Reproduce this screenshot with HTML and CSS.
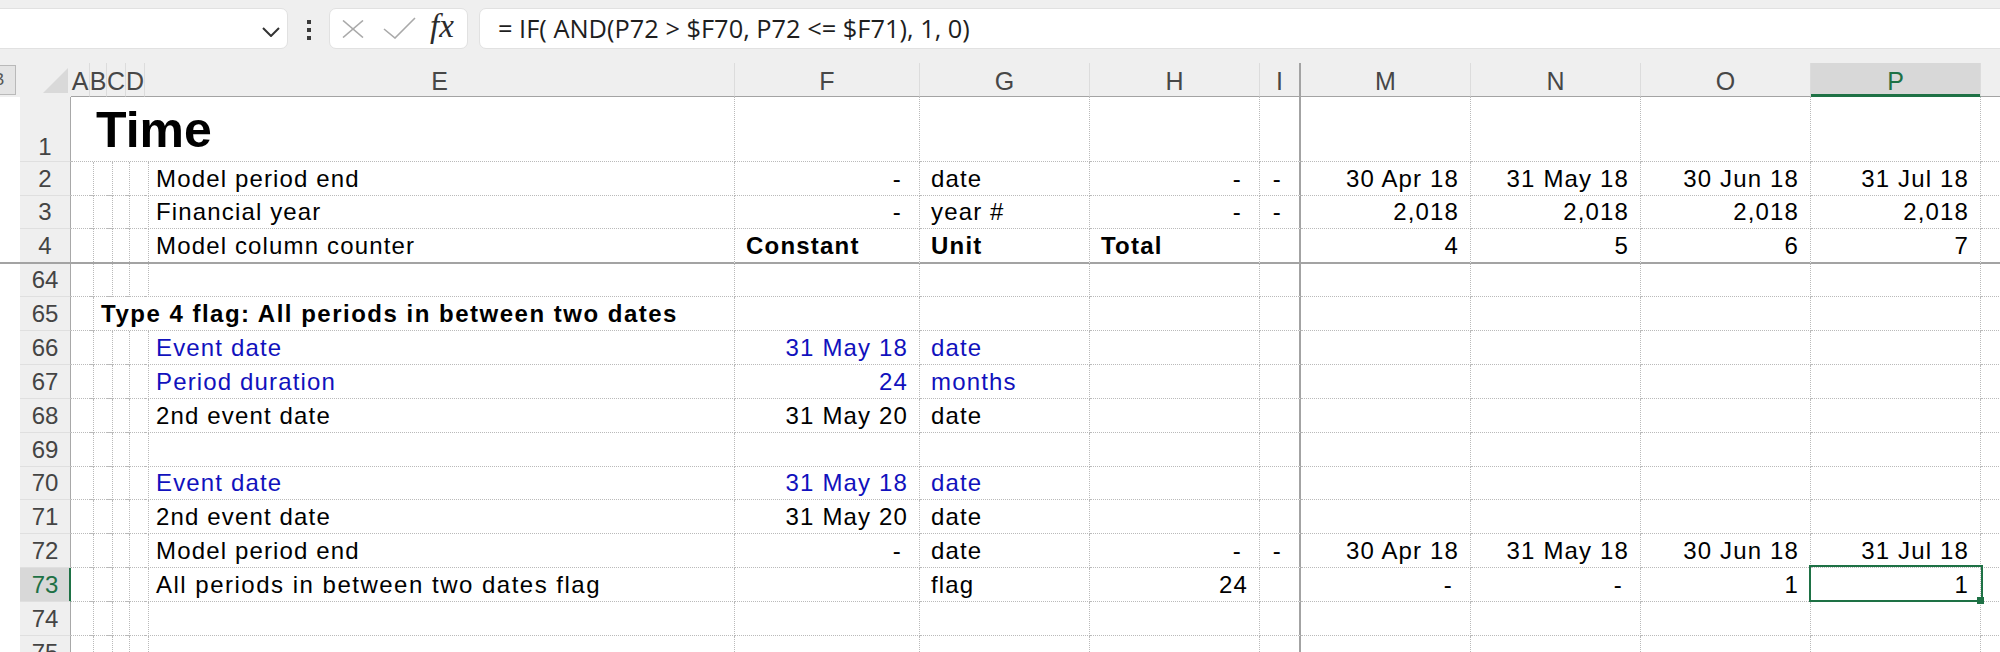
FILE: index.html
```html
<!DOCTYPE html>
<html>
<head>
<meta charset="utf-8">
<title>Time sheet</title>
<link rel="stylesheet" href="styles.css">
</head>
<body>
<div class="app">
  <div class="fbar">
    <div class="namebox">
      <svg class="chev" viewBox="0 0 18 10"><polyline points="1,1 9,9 17,1" fill="none" stroke="#333" stroke-width="2"/></svg>
    </div>
    <div class="vdots"><i></i><i></i><i></i></div>
    <div class="fbtns">
      <svg class="ico-x" viewBox="0 0 22 18"><line x1="1" y1="0.5" x2="21" y2="17.5" stroke="#a9a9a9" stroke-width="1.6"/><line x1="21" y1="0.5" x2="1" y2="17.5" stroke="#a9a9a9" stroke-width="1.6"/></svg>
      <svg class="ico-ok" viewBox="0 0 33 22"><polyline points="1,12 12,21 32,1" fill="none" stroke="#a9a9a9" stroke-width="1.6"/></svg>
      <span class="fx">fx</span>
    </div>
    <div class="finput">= IF( AND(P72 &gt; $F70, P72 &lt;= $F71), 1, 0)</div>
  </div>

  <div class="sheet">
    <div class="row hdr">
      <div class="stub"><div class="bbox">B</div></div>
      <div class="corner"><svg viewBox="0 0 25 25"><polygon points="0,25 25,0 25,25" fill="#d9d9d9"/></svg></div>
      <div class="ch">A</div><div class="ch">B</div><div class="ch">C</div><div class="ch">D</div>
      <div class="ch">E</div><div class="ch">F</div><div class="ch">G</div><div class="ch">H</div>
      <div class="ch i">I</div><div class="ch">M</div><div class="ch">N</div><div class="ch">O</div>
      <div class="ch act">P</div><div class="ch"></div>
    </div>

    <div class="row h65">
      <div class="stub"></div><div class="rh r1">1</div>
      <div class="c span5 title">Time</div>
      <div class="c"></div><div class="c"></div><div class="c"></div><div class="c i"></div>
      <div class="c"></div><div class="c"></div><div class="c"></div><div class="c"></div><div class="c"></div>
    </div>

    <div class="row h34">
      <div class="stub"></div><div class="rh">2</div>
      <div class="c"></div><div class="c"></div><div class="c"></div><div class="c"></div>
      <div class="c">Model period end</div><div class="c r d">-</div><div class="c">date</div><div class="c r d">-</div><div class="c r d i">-</div>
      <div class="c r">30 Apr 18</div><div class="c r">31 May 18</div><div class="c r">30 Jun 18</div><div class="c r">31 Jul 18</div><div class="c"></div>
    </div>

    <div class="row h33">
      <div class="stub"></div><div class="rh">3</div>
      <div class="c"></div><div class="c"></div><div class="c"></div><div class="c"></div>
      <div class="c">Financial year</div><div class="c r d">-</div><div class="c">year #</div><div class="c r d">-</div><div class="c r d i">-</div>
      <div class="c r">2,018</div><div class="c r">2,018</div><div class="c r">2,018</div><div class="c r">2,018</div><div class="c"></div>
    </div>

    <div class="row h35 frz">
      <div class="stub"></div><div class="rh">4</div>
      <div class="c"></div><div class="c"></div><div class="c"></div><div class="c"></div>
      <div class="c">Model column counter</div><div class="c b">Constant</div><div class="c b">Unit</div><div class="c b">Total</div><div class="c i"></div>
      <div class="c r">4</div><div class="c r">5</div><div class="c r">6</div><div class="c r">7</div><div class="c"></div>
    </div>

    <div class="row h33">
      <div class="stub"></div><div class="rh">64</div>
      <div class="c"></div><div class="c"></div><div class="c"></div><div class="c"></div>
      <div class="c"></div><div class="c"></div><div class="c"></div><div class="c"></div><div class="c i"></div>
      <div class="c"></div><div class="c"></div><div class="c"></div><div class="c"></div><div class="c"></div>
    </div>

    <div class="row h34">
      <div class="stub"></div><div class="rh">65</div>
      <div class="c"></div>
      <div class="c span4 b wide">Type 4 flag: All periods in between two dates</div>
      <div class="c"></div><div class="c"></div><div class="c"></div><div class="c i"></div>
      <div class="c"></div><div class="c"></div><div class="c"></div><div class="c"></div><div class="c"></div>
    </div>

    <div class="row h34">
      <div class="stub"></div><div class="rh">66</div>
      <div class="c"></div><div class="c"></div><div class="c"></div><div class="c"></div>
      <div class="c blue">Event date</div><div class="c r blue">31 May 18</div><div class="c blue">date</div><div class="c"></div><div class="c i"></div>
      <div class="c"></div><div class="c"></div><div class="c"></div><div class="c"></div><div class="c"></div>
    </div>

    <div class="row h34">
      <div class="stub"></div><div class="rh">67</div>
      <div class="c"></div><div class="c"></div><div class="c"></div><div class="c"></div>
      <div class="c blue">Period duration</div><div class="c r blue">24</div><div class="c blue">months</div><div class="c"></div><div class="c i"></div>
      <div class="c"></div><div class="c"></div><div class="c"></div><div class="c"></div><div class="c"></div>
    </div>

    <div class="row h34">
      <div class="stub"></div><div class="rh">68</div>
      <div class="c"></div><div class="c"></div><div class="c"></div><div class="c"></div>
      <div class="c">2nd event date</div><div class="c r">31 May 20</div><div class="c">date</div><div class="c"></div><div class="c i"></div>
      <div class="c"></div><div class="c"></div><div class="c"></div><div class="c"></div><div class="c"></div>
    </div>

    <div class="row h34">
      <div class="stub"></div><div class="rh">69</div>
      <div class="c"></div><div class="c"></div><div class="c"></div><div class="c"></div>
      <div class="c"></div><div class="c"></div><div class="c"></div><div class="c"></div><div class="c i"></div>
      <div class="c"></div><div class="c"></div><div class="c"></div><div class="c"></div><div class="c"></div>
    </div>

    <div class="row h33">
      <div class="stub"></div><div class="rh">70</div>
      <div class="c"></div><div class="c"></div><div class="c"></div><div class="c"></div>
      <div class="c blue">Event date</div><div class="c r blue">31 May 18</div><div class="c blue">date</div><div class="c"></div><div class="c i"></div>
      <div class="c"></div><div class="c"></div><div class="c"></div><div class="c"></div><div class="c"></div>
    </div>

    <div class="row h34">
      <div class="stub"></div><div class="rh">71</div>
      <div class="c"></div><div class="c"></div><div class="c"></div><div class="c"></div>
      <div class="c">2nd event date</div><div class="c r">31 May 20</div><div class="c">date</div><div class="c"></div><div class="c i"></div>
      <div class="c"></div><div class="c"></div><div class="c"></div><div class="c"></div><div class="c"></div>
    </div>

    <div class="row h34">
      <div class="stub"></div><div class="rh">72</div>
      <div class="c"></div><div class="c"></div><div class="c"></div><div class="c"></div>
      <div class="c">Model period end</div><div class="c r d">-</div><div class="c">date</div><div class="c r d">-</div><div class="c r d i">-</div>
      <div class="c r">30 Apr 18</div><div class="c r">31 May 18</div><div class="c r">30 Jun 18</div><div class="c r">31 Jul 18</div><div class="c"></div>
    </div>

    <div class="row h34">
      <div class="stub"></div><div class="rh act">73</div>
      <div class="c"></div><div class="c"></div><div class="c"></div><div class="c"></div>
      <div class="c wide">All periods in between two dates flag</div><div class="c"></div><div class="c">flag</div><div class="c r">24</div><div class="c i"></div>
      <div class="c r d">-</div><div class="c r d">-</div><div class="c r">1</div>
      <div class="c r selcell">1<span class="selbox"></span><span class="handle"></span></div>
      <div class="c"></div>
    </div>

    <div class="row h34">
      <div class="stub"></div><div class="rh">74</div>
      <div class="c"></div><div class="c"></div><div class="c"></div><div class="c"></div>
      <div class="c"></div><div class="c"></div><div class="c"></div><div class="c"></div><div class="c i"></div>
      <div class="c"></div><div class="c"></div><div class="c"></div><div class="c"></div><div class="c"></div>
    </div>

    <div class="row h34">
      <div class="stub"></div><div class="rh top">75</div>
      <div class="c"></div><div class="c"></div><div class="c"></div><div class="c"></div>
      <div class="c"></div><div class="c"></div><div class="c"></div><div class="c"></div><div class="c i"></div>
      <div class="c"></div><div class="c"></div><div class="c"></div><div class="c"></div><div class="c"></div>
    </div>
  </div>
</div>
</body>
</html>
```

FILE: styles.css
```css
* { box-sizing: border-box; margin: 0; padding: 0; }
html, body { width: 2000px; height: 652px; overflow: hidden; background: #fff; }
body { font-family: "Liberation Sans", Arial, sans-serif; color: #000; }
.app { width: 2000px; height: 652px; overflow: hidden; }

/* formula bar */
.fbar { height: 63px; background: #efefef; display: flex; align-items: flex-start; padding-top: 8px; overflow: hidden; }
.namebox { flex: none; width: 298px; margin-left: -10px; height: 41px; background: #fff; border: 1px solid #e1e1e1; border-radius: 7px; display: flex; align-items: center; justify-content: flex-end; padding: 7px 7px 0 0; }
.chev { width: 18px; height: 10px; display: block; }
.vdots { flex: none; width: 41px; display: flex; flex-direction: column; align-items: center; gap: 4px; padding-top: 12px; }
.vdots i { display: block; width: 4px; height: 4px; background: #3a3a3a; }
.fbtns { flex: none; width: 139px; height: 41px; background: #fff; border: 1px solid #e1e1e1; border-radius: 7px; display: flex; align-items: center; }
.ico-x { width: 22px; height: 18px; margin-left: 12px; display: block; }
.ico-ok { width: 33px; height: 22px; margin-left: 19px; margin-top: -2px; display: block; }
.fx { font-family: "Liberation Serif", "Times New Roman", serif; font-style: italic; font-size: 33px; color: #2b2b2b; margin-left: 14px; line-height: 39px; margin-top: -4px; }
.finput { flex: none; width: 1540px; margin-left: 11px; height: 41px; background: #fff; border: 1px solid #e1e1e1; border-radius: 7px; padding-left: 18px; font-family: "Open Sans", "Noto Sans", sans-serif; font-size: 25.4px; line-height: 39px; color: #1e1e1e; white-space: nowrap; }

/* sheet */
.sheet { width: 2000px; overflow: hidden; }
.row { display: grid; grid-template-columns: 20px 51px 19px 17px 19px 19px 590px 185px 170px 170px 41px 170px 170px 170px 170px 100px; width: 2081px; }
.hdr { height: 34px; background: #efefef; }
.h33 { height: 33px; }
.h34 { height: 34px; }
.h35 { height: 35px; }
.h65 { height: 65px; }

.stub { background: #fff; }
.hdr .stub { background: #efefef; padding-top: 2px; }
.bbox { width: 16px; height: 30px; border: 1px solid #b9b9b9; border-left: none; background: #e4e4e4; overflow: hidden; font-size: 17px; line-height: 28px; text-indent: -7px; color: #555; white-space: nowrap; }
.corner { display: flex; justify-content: flex-end; align-items: flex-end; padding: 0 3px 4px 0; }
.corner svg { width: 25px; height: 25px; display: block; }

.ch { display: flex; justify-content: center; align-items: flex-end; padding-bottom: 1px; font-size: 25px; line-height: 28px; color: #474747; border-right: 1px solid #dcdcdc; border-bottom: 1px solid #a3a3a3; white-space: nowrap; overflow: visible; }
.ch.i { border-right: 2px solid #a3a3a3; }
.ch.act { background: #d8d8d8; color: #1e7145; border-bottom-color: #1e7145; box-shadow: inset 0 -2px 0 #1e7145; }

.rh { background: #efefef; border-right: 1px solid #a8a8a8; border-bottom: 1px solid #dfdfdf; display: flex; justify-content: center; align-items: flex-end; padding-bottom: 3px; font-size: 24px; line-height: 27px; color: #444; }
.rh.r1 { padding-bottom: 1px; }
.rh.act { background: #d8d8d8; color: #1e7145; border-right: 1px solid #1e7145; box-shadow: inset -1px 0 0 #1e7145; }
.rh.top { align-items: flex-start; padding-top: 3px; }

.c { display: flex; align-items: flex-end; padding: 0 11px 3px 11px; border-right: 1px dotted #bababa; border-bottom: 1px dotted #bababa; font-size: 24px; letter-spacing: 1.15px; line-height: 27px; white-space: nowrap; overflow: visible; }
.c.r { justify-content: flex-end; }
.c.d { padding-right: 17px; }
.c.i { border-right: 2px solid #a3a3a3; }
.c.b { font-weight: bold; letter-spacing: 1.2px; }
.c.wide { letter-spacing: 1.5px; }
.c.blue { color: #1111bd; }
.span5 { grid-column: span 5; }
.span4 { grid-column: span 4; }
.title { font-size: 50px; font-weight: bold; letter-spacing: 0; line-height: 57px; padding-left: 25px; padding-bottom: 2px; }

.frz > div { border-bottom: 2px solid #a3a3a3; }

.selcell { position: relative; }
.selbox { position: absolute; left: -2px; top: -3px; right: -3px; bottom: -1px; border: 2px solid #1e7145; }
.handle { position: absolute; right: -4px; bottom: -3px; width: 7px; height: 7px; background: #1e7145; }
```
